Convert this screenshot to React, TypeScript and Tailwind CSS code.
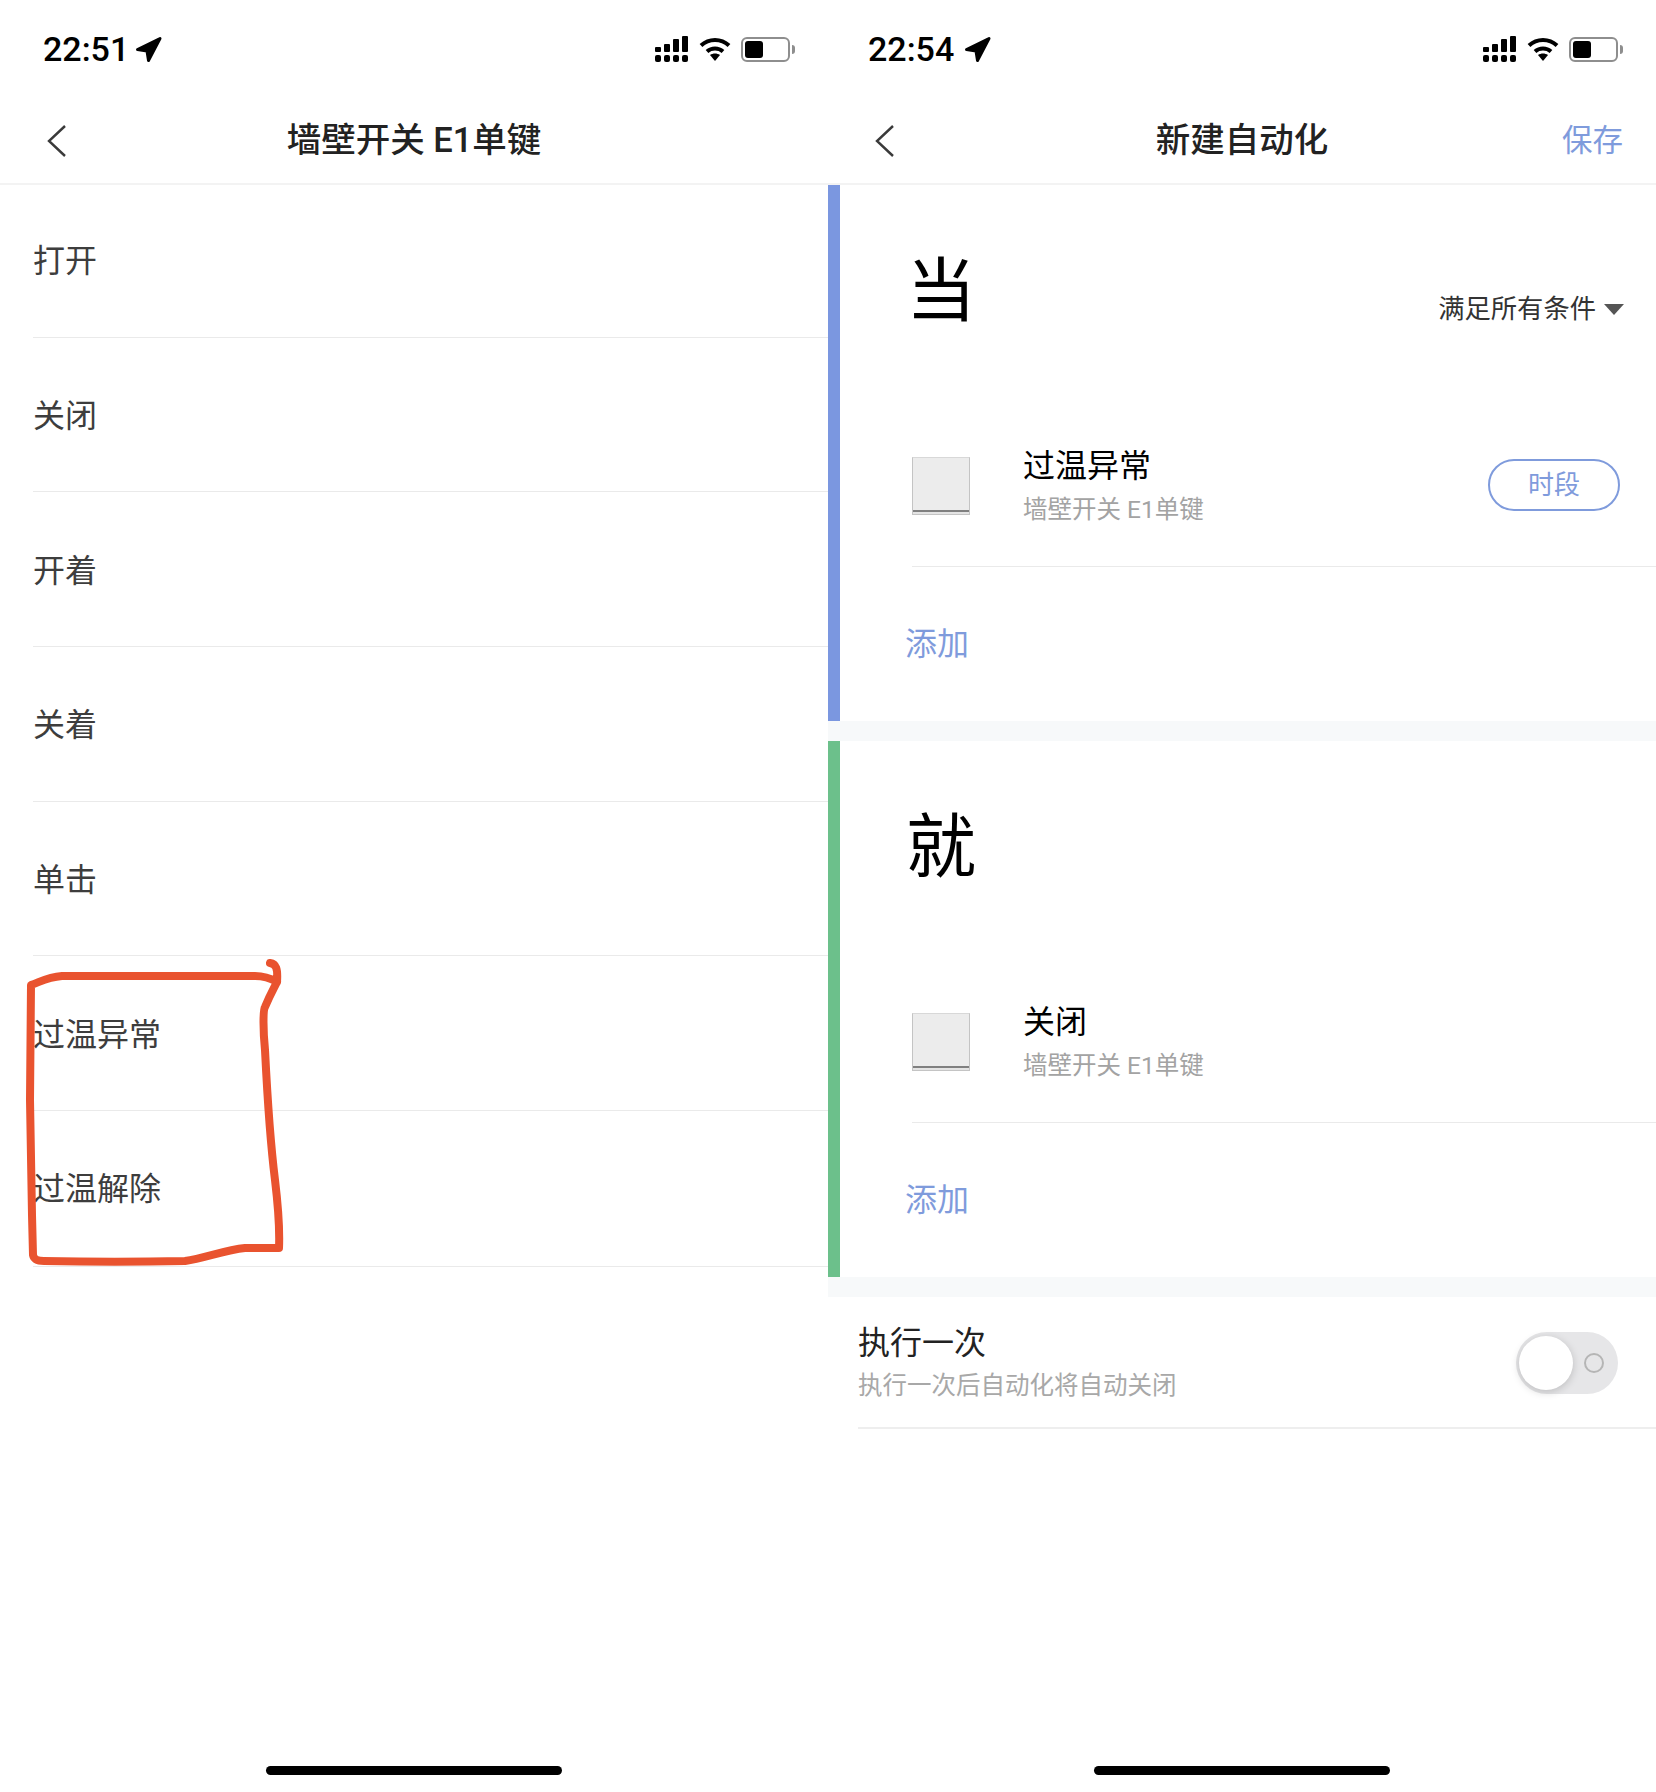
const cjk = "font-['Roboto','Noto_Sans_CJK_SC',sans-serif]"

const leftRows = ["打开", "关闭", "开着", "关着", "单击", "过温异常", "过温解除"]

const StatusIcons = () => (
    <div className="flex items-center gap-[10px]">
        <svg width="34" height="26" viewBox="0 0 34 26" fill="#000">
            <rect x="0" y="11" width="6" height="5" rx="1" />
            <rect x="9" y="8" width="6" height="8" rx="1" />
            <rect x="18" y="3" width="6" height="13" rx="1" />
            <rect x="27" y="0" width="6" height="16" rx="1" />
            <rect x="0" y="19" width="6" height="7" rx="2" />
            <rect x="9" y="19" width="6" height="7" rx="2" />
            <rect x="18" y="19" width="6" height="7" rx="2" />
            <rect x="27" y="19" width="6" height="7" rx="2" />
        </svg>
        <svg width="32" height="24" viewBox="0 0 32 24" fill="none" stroke="#000" strokeWidth="4">
            <path d="M2 8.5C10 1 22 1 30 8.5" />
            <path d="M8 14.5C12.500 10.500 19.500 10.500 24 14.500" />
            <path d="M11 18C14 16 18 16 21 18L16 24Z" fill="#000" stroke="none" />
        </svg>
        <div className="flex items-center gap-[2px]">
            <div className="w-[49px] h-[25px] rounded-[6px] border-2 border-[#8e8e8e] p-[2px]">
                <div className="w-[18px] h-full rounded-[3px] bg-black" />
            </div>
            <div className="w-[3px] h-[9px] rounded-r-full bg-[#8e8e8e]" />
        </div>
    </div>
)

const StatusBar = ({ time, left, gap }: { time: string; left: string; gap: string }) => (
    <div className={`h-[98px] flex items-center justify-between pr-[33px] ${left}`}>
        <div className={`flex items-center ${gap}`}>
            <span className="font-['Roboto',sans-serif] text-[34px] font-medium leading-none text-black">{time}</span>
            <svg width="27" height="27" viewBox="0 0 27 27" fill="#000" stroke="#000" strokeWidth="3" strokeLinejoin="round">
                <path d="M25 2.500L13.500 24.500L12 15L2.500 13.500Z" />
            </svg>
        </div>
        <StatusIcons />
    </div>
)

const NavBar = ({ title, action }: { title: string; action?: string }) => (
    <div className="relative h-[87px] flex items-center justify-center border-b-2 border-[#f3f3f3]">
        <svg className="absolute left-[47px] top-[27px]" width="20" height="32" viewBox="0 0 20 32" fill="none" stroke="#3a3a3a" strokeWidth="2.400">
            <path d="M18 1L2 16L18 31" />
        </svg>
        <span className={`${cjk} text-[34.500px] font-medium leading-none text-[#222]`}>{title}</span>
        {action && <span className={`${cjk} absolute right-[33px] top-[28px] text-[30.500px] leading-none text-[#7f9bdc]`}>{action}</span>}
    </div>
)

const HomeBar = () => (
    <div className="mt-auto mb-[17px] self-center w-[296px] h-[9px] rounded-full bg-black" />
)

const SwitchThumb = () => (
    <div className="w-[58px] h-[58px] shrink-0 border border-[#c4c4c4] border-t-[#d8d8d8] bg-[#ececec] flex flex-col justify-end">
        <div className="h-[4px] border-t-2 border-[#808080] bg-[#e4e4e4]" />
    </div>
)

const Section = ({ word, bar, title, time, hasMatch }: { word: string; bar: string; title: string; time?: boolean; hasMatch?: boolean }) => (
    <div className="flex h-[536px]">
        <div className={`w-[12px] shrink-0 ${bar}`} />
        <div className="flex-1 flex flex-col">
            <div className="h-[221px] flex justify-between pl-[66px] pr-[32px]">
                <span className={`${cjk} mt-[72px] text-[70px] leading-none text-black`}>{word}</span>
                {hasMatch && (
                    <div className="mt-[108px] h-[32px] flex items-center gap-[8px]">
                        <span className={`${cjk} text-[26.300px] leading-none text-[#333]`}>满足所有条件</span>
                        <div className="w-0 h-0 border-x-[10px] border-x-transparent border-t-[11px] border-t-[#555]" />
                    </div>
                )}
            </div>
            <div className="ml-[72px] h-[161px] flex items-center gap-[53px] pr-[36px] border-b border-[#eaeaea]">
                <SwitchThumb />
                <div className="flex-1 flex flex-col gap-[16px]">
                    <span className={`${cjk} text-[32px] leading-none text-black`}>{title}</span>
                    <span className={`${cjk} text-[24.500px] leading-none text-[#a3a3a3]`}>墙壁开关 E1单键</span>
                </div>
                {time && (
                    <div className={`${cjk} w-[132px] h-[52px] -mt-[2px] flex items-center justify-center rounded-full border-2 border-[#7f9bdc] text-[26px] leading-none text-[#7f9bdc]`}>
                        时段
                    </div>
                )}
            </div>
            <div className="flex-1 flex items-center pl-[65px]">
                <span className={`${cjk} text-[32px] leading-none text-[#7f9bdc]`}>添加</span>
            </div>
        </div>
    </div>
)

const Gap = () => <div className="h-[20px] bg-[#f7f9fa]" />

export default function App() {
    return (
        <div className="flex w-[1656px] h-[1792px] bg-white overflow-hidden">
            <div className="relative w-[828px] flex flex-col">
                <StatusBar time="22:51" left="pl-[43px]" gap="gap-[6px]" />
                <NavBar title="墙壁开关 E1单键" />
                <div className="pl-[33px] -mt-[2px]">
                    {leftRows.map((row) => (
                        <div key={row} className="h-[154.700px] last:h-[155.800px] flex items-center pt-[3px] last:pt-[1px] border-b border-[#eaeaea]">
                            <span className={`${cjk} text-[32px] leading-none text-[#3d3d3d]`}>{row}</span>
                        </div>
                    ))}
                </div>
                <HomeBar />
                {/* hand drawn mark over the last two rows */}
                <svg className="absolute left-0 top-0 pointer-events-none" width="300" height="1300" fill="none" stroke="#e9532f" strokeWidth="8" strokeLinecap="round" strokeLinejoin="round">
                    <path d="M270 963C276 964 278 968 277 982C270 978 262 976 255 976L62 976C48 977 42 981 31 985L30 1100L32 1215L33 1255C34 1260 38 1261 44 1261C90 1262 140 1262 185 1261C205 1258 225 1250 245 1248L279 1248C280 1225 278 1205 275 1180C270 1140 267 1090 265 1050C263 1030 263 1010 265 1007C270 995 273 990 277 982" />
                </svg>
            </div>
            <div className="w-[828px] flex flex-col">
                <StatusBar time="22:54" left="pl-[40px]" gap="gap-[10px]" />
                <NavBar title="新建自动化" action="保存" />
                <Section word="当" bar="bg-[#7b97e0]" title="过温异常" time hasMatch />
                <Gap />
                <Section word="就" bar="bg-[#6cc08b]" title="关闭" />
                <Gap />
                <div className="ml-[30px] h-[132px] flex items-center justify-between pt-[2px] pr-[38px] border-b-2 border-[#eeeeee]">
                    <div className="flex flex-col gap-[15px]">
                        <span className={`${cjk} text-[32px] leading-none text-[#222]`}>执行一次</span>
                        <span className={`${cjk} text-[24.500px] leading-none text-[#a8a8a8]`}>执行一次后自动化将自动关闭</span>
                    </div>
                    <div className="relative w-[102px] h-[62px] rounded-full bg-[#e6e6e8] flex items-center justify-end pr-[14px]">
                        <div className="absolute left-[3px] top-[4px] w-[54px] h-[54px] rounded-full bg-white shadow-[0_2px_8px_rgba(0,0,0,0.18)]" />
                        <div className="w-[20px] h-[20px] rounded-full border-2 border-[#b5b5b5]" />
                    </div>
                </div>
                <HomeBar />
            </div>
        </div>
    )
}
